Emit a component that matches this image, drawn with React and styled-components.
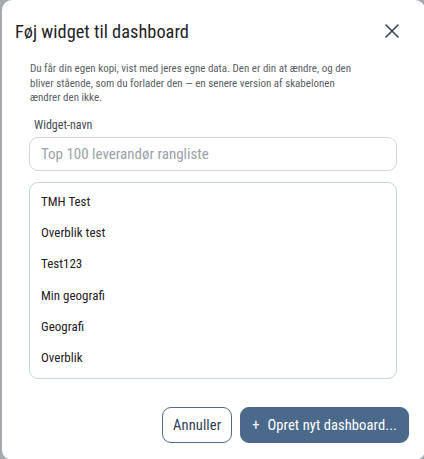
import React from "react";
import styled, { createGlobalStyle } from "styled-components";

const Global = createGlobalStyle`
  html, body { margin: 0; padding: 0; }
  body {
    background: #a6a9ad;
    font-family: Roboto, "Noto Sans", sans-serif;
    font-stretch: condensed;
    overflow: hidden;
  }
`;

const Dialog = styled.div`
  box-sizing: border-box;
  margin-left: 2px;
  width: 423px;
  height: 460px;
  background: #fff;
  border-radius: 10px;
  display: flex;
  flex-direction: column;
  padding: 0 14px 0 13px;
`;

const Header = styled.div`
  display: flex;
  align-items: center;
  justify-content: space-between;
  height: 62px;
  padding-right: 11px;
`;

const Title = styled.h2`
  margin: 0;
  font-size: 18.4px;
  font-weight: 400;
  color: #1f2328;
`;

const CloseBtn = styled.button`
  border: 0;
  background: none;
  padding: 0;
  width: 16px;
  height: 16px;
  display: flex;
  align-items: center;
  justify-content: center;
  color: #3a4352;
  cursor: pointer;
`;

const Body = styled.div`
  display: flex;
  flex-direction: column;
  padding: 0 14px 0 14px;
`;

const Description = styled.p`
  margin: 0 0 0 1px;
  max-width: 336px;
  font-size: 11px;
  line-height: 14.5px;
  color: #5a5e65;
`;

const Label = styled.label`
  margin-top: 12px;
  padding-left: 5px;
  font-size: 12px;
  color: #444a52;
`;

const Input = styled.input`
  box-sizing: border-box;
  margin-top: 5px;
  height: 34px;
  width: 100%;
  border: 1px solid #d3d7dc;
  border-radius: 9px;
  padding: 0 11px;
  font-family: inherit;
  font-stretch: condensed;
  font-size: 15px;
  color: #222;
  outline: none;
  &::placeholder { color: #9aa1ab; }
`;

const List = styled.ul`
  box-sizing: border-box;
  list-style: none;
  margin: 11px 0 0;
  padding: 3px 0 4px;
  height: 197px;
  border: 1px solid #c9d3de;
  border-radius: 9px;
  display: flex;
  flex-direction: column;
`;

const Item = styled.li`
  height: 32px;
  display: flex;
  align-items: center;
  padding-left: 11px;
  font-size: 13px;
  color: #1e2126;
`;

const Footer = styled.div`
  margin-top: auto;
  height: 53px;
  display: flex;
  justify-content: flex-end;
  align-items: flex-start;
  gap: 8px;
  padding-right: 2px;
`;

const Button = styled.button`
  box-sizing: border-box;
  height: 36px;
  border-radius: 9px;
  font-family: inherit;
  font-stretch: condensed;
  font-size: 14.5px;
  padding: 0 ${(p) => (p.$primary ? "11px" : "10px")};
  display: flex;
  align-items: center;
  gap: 8px;
  cursor: pointer;
  border: 1px solid ${(p) => (p.$primary ? "#4b6a8b" : "#4f6c8c")};
  background: ${(p) => (p.$primary ? "#4b6a8b" : "#fff")};
  color: ${(p) => (p.$primary ? "#fff" : "#2d3e55")};
  letter-spacing: 0.1px;
`;

const items = ["TMH Test", "Overblik test", "Test123", "Min geografi", "Geografi", "Overblik"];

export default function App() {
  return (
    <>
      <Global />
      <Dialog>
        <Header>
          <Title>Føj widget til dashboard</Title>
          <CloseBtn aria-label="Luk">
            <svg width="14" height="14" viewBox="0 0 14 14" fill="none" stroke="currentColor" strokeWidth="1.6" strokeLinecap="round">
              <path d="M1 1L13 13M13 1L1 13" />
            </svg>
          </CloseBtn>
        </Header>
        <Body>
          <Description>
            Du får din egen kopi, vist med jeres egne data. Den er din at ændre, og den bliver stående, som du forlader den — en senere version af skabelonen ændrer den ikke.
          </Description>
          <Label>Widget-navn</Label>
          <Input placeholder="Top 100 leverandør rangliste" />
          <List>
            {items.map((it) => (
              <Item key={it}>{it}</Item>
            ))}
          </List>
        </Body>
        <Footer>
          <Button>Annuller</Button>
          <Button $primary>
            <span>+</span>
            <span>Opret nyt dashboard...</span>
          </Button>
        </Footer>
      </Dialog>
    </>
  );
}
